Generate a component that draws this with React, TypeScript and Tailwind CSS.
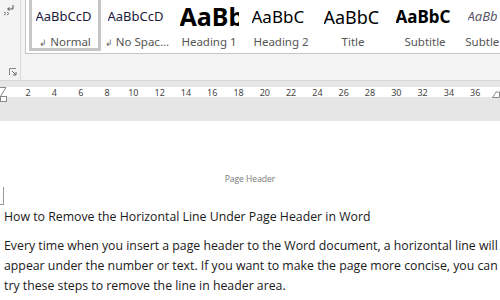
import React from 'react';

const styles = [
  { preview: 'AaBbCcD', label: 'Normal', mark: true, cls: 'text-[13px] text-[#1a1a40]', selected: true },
  { preview: 'AaBbCcD', label: 'No Spac...', mark: true, cls: 'text-[13px] text-[#1a1a40]' },
  { preview: 'AaBb', label: 'Heading 1', cls: 'text-[25px] font-bold text-black' },
  { preview: 'AaBbC', label: 'Heading 2', cls: 'text-[17px] text-black' },
  { preview: 'AaBbC', label: 'Title', cls: 'text-[18px] text-black' },
  { preview: 'AaBbC', label: 'Subtitle', cls: 'text-[17px] font-bold text-black' },
  { preview: 'AaBb', label: 'Subtle Em...', cls: 'text-[13px] italic text-[#5a5a6a]' },
];

const rulerNums = [2, 4, 6, 8, 10, 12, 14, 16, 18, 20, 22, 24, 26, 28, 30, 32, 34, 36];

function App() {
  return (
    <div className="w-[500px] h-[300px] overflow-hidden bg-white font-['Noto_Sans',sans-serif]">
      {/* ribbon */}
      <div className="flex h-[81px] bg-[#f3f3f3] border-b border-[#d6d6d6]">
        <div className="flex w-[21px] flex-col justify-between border-r border-[#dadada] pb-[4px] pt-[3px]">
          <svg width="14" height="14" viewBox="0 0 14 14" className="ml-[3px]">
            <path d="M10 2v4H5" stroke="#555" strokeWidth="1" fill="none" />
            <path d="M6.5 4.5L4.5 6 6.5 7.5" stroke="#555" strokeWidth="1" fill="none" />
            <path d="M1 9l2 1.5L1 12M4 9l2 1.5L4 12" stroke="#777" strokeWidth="1" fill="none" />
          </svg>
          <svg width="8" height="8" viewBox="0 0 8 8" className="ml-[9px]">
            <path d="M0.5 7V0.5H7" stroke="#888" strokeWidth="1" fill="none" />
            <path d="M3 3l4 4M7 4v3H4" stroke="#666" strokeWidth="1" fill="none" />
          </svg>
        </div>
        <div className="ml-[4px] flex h-[54px] flex-1 items-start overflow-hidden border-b border-l border-[#c6c6c6] bg-white pl-[3px]">
          {styles.map((s, i) => (
            <div
              key={i}
              className={`flex h-[51px] w-[72px] shrink-0 flex-col items-center ${
                s.selected ? 'border-[3px] border-t-0 border-[#c6c6c6]' : ''
              }`}
            >
              <div className={`flex h-[33px] w-[59px] items-center overflow-hidden whitespace-nowrap leading-none ${s.cls}`}>
                {s.preview}
              </div>
              <div className="mt-[3px] whitespace-nowrap text-[11.5px] leading-none text-[#555]">
                {s.mark && <span className="mr-[3px] text-[9px] text-[#666]">↲</span>}
                {s.label}
              </div>
            </div>
          ))}
        </div>
      </div>

      {/* ruler area */}
      <div className="h-[40px] bg-[#e6e6e6]">
        <div className="h-[6px]" />
        <div className="relative flex h-[10px] items-center bg-white pl-[15px] text-[9px] leading-none text-[#444]">
          {rulerNums.map((n) => (
            <div key={n} className="w-[26.3px] shrink-0 text-center">
              {n}
            </div>
          ))}
          <svg width="8" height="15" viewBox="0 0 8 15" className="absolute left-0 top-0">
            <path d="M0 0.5L6 0.5 0.5 9.5 6 9.5" stroke="#888" fill="#fff" strokeWidth="1" />
            <rect x="0.5" y="9.5" width="6" height="5" stroke="#888" fill="#fff" />
          </svg>
          <svg width="8" height="10" viewBox="0 0 8 10" className="absolute right-0 top-[1px]">
            <path d="M0.5 9.5L4 4 7.5 4 7.5 9.5Z" stroke="#888" fill="#fff" strokeWidth="1" />
          </svg>
        </div>
      </div>

      {/* page */}
      <div className="bg-white pt-[54px] font-['Open_Sans',sans-serif]">
        <div className="text-center text-[8.5px] leading-none text-[#777]">Page Header</div>
        <div className="mt-[3px] h-[18px] w-[4px] border-r border-b border-[#999]" />
        <div className="mt-[4px] whitespace-nowrap pl-[4px] text-[12.3px] leading-[16px] text-[#1a1a1a]">
          How to Remove the Horizontal Line Under Page Header in Word
        </div>
        <div className="mt-[11px] whitespace-nowrap pl-[4px] text-[12.3px] leading-[20px] text-[#1a1a1a]">
          <div>Every time when you insert a page header to the Word document, a horizontal line will</div>
          <div>appear under the number or text. If you want to make the page more concise, you can</div>
          <div>try these steps to remove the line in header area.</div>
        </div>
      </div>
    </div>
  );
}

export default App;
